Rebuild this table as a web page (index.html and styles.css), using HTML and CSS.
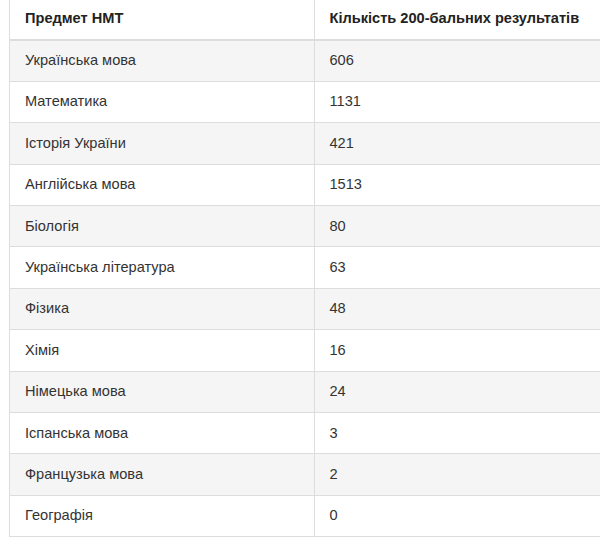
FILE: index.html
```html
<!DOCTYPE html>
<html lang="uk">
<head>
<meta charset="utf-8">
<title>Кількість 200-бальних результатів НМТ</title>
<link rel="stylesheet" href="styles.css">
</head>
<body>
<table class="results">
  <thead>
    <tr><th>Предмет НМТ</th><th>Кількість 200-бальних результатів</th></tr>
  </thead>
  <tbody>
    <tr><td>Українська мова</td><td>606</td></tr>
    <tr><td>Математика</td><td>1131</td></tr>
    <tr><td>Історія України</td><td>421</td></tr>
    <tr><td>Англійська мова</td><td>1513</td></tr>
    <tr><td>Біологія</td><td>80</td></tr>
    <tr><td>Українська література</td><td>63</td></tr>
    <tr><td>Фізика</td><td>48</td></tr>
    <tr><td>Хімія</td><td>16</td></tr>
    <tr><td>Німецька мова</td><td>24</td></tr>
    <tr><td>Іспанська мова</td><td>3</td></tr>
    <tr><td>Французька мова</td><td>2</td></tr>
    <tr><td>Географія</td><td>0</td></tr>
  </tbody>
</table>
</body>
</html>
```

FILE: styles.css
```css
html, body {
  margin: 0;
  padding: 0;
  background: #ffffff;
  overflow: hidden;
}
body {
  font-family: "Liberation Sans", Arial, sans-serif;
  font-size: 14.6px;
  color: #333333;
}
.results {
  border-collapse: collapse;
  width: 610px;
  margin: -2px 0 0 9px;
  table-layout: fixed;
}
.results th,
.results td {
  border: 1px solid #dddddd;
  height: 41.4px;
  box-sizing: border-box;
  padding: 0 15px 1px;
  text-align: left;
  vertical-align: middle;
  font-weight: normal;
}
.results th {
  font-weight: bold;
  color: #222222;
  border-bottom-width: 2px;
}
.results tbody tr:nth-child(odd) td {
  background: #f5f5f5;
}
```
